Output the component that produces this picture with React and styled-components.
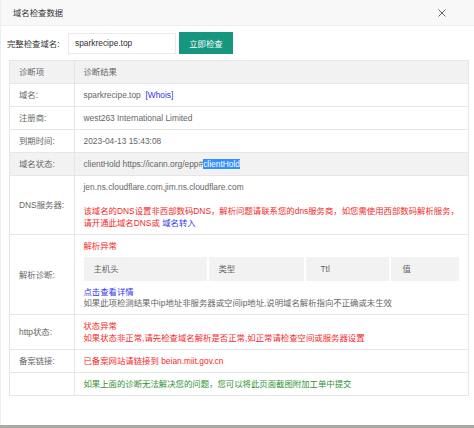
import React from 'react';
import styled, { createGlobalStyle } from 'styled-components';

const GlobalStyle = createGlobalStyle`
    html, body {
        margin: 0;
        padding: 0;
        background: #a9a9a3;
    }
    body {
        font-family: "Liberation Sans", "Noto Sans CJK SC", sans-serif;
        font-size: 8.4px;
        color: #666;
    }
`;

const Dialog = styled.div`
    width: 474px;
    height: 425px;
    background: #fff;
    box-sizing: border-box;
    border-left: 1px solid #eee;
`;

const TitleBar = styled.div`
    height: 25px;
    display: flex;
    align-items: center;
    justify-content: space-between;
    padding: 0 28px 0 12px;
    background: #f8f8f8;
    border-bottom: 1px solid #eee;
    color: #333;
    line-height: 12px;
`;

const Close = styled.span`
    display: flex;
    color: #555;
`;

const SearchRow = styled.div`
    display: flex;
    align-items: center;
    padding: 6px 0 0 6px;
    height: 22px;
`;

const Label = styled.span`
    color: #333;
    width: 61px;
`;

const Input = styled.div`
    width: 108px;
    height: 21px;
    box-sizing: border-box;
    border: 1px solid #eaeaea;
    padding-left: 6px;
    display: flex;
    align-items: center;
    color: #333;
`;

const CheckButton = styled.div`
    margin-left: 3px;
    width: 54px;
    height: 22px;
    background: #16967f;
    color: #fff;
    display: flex;
    align-items: center;
    justify-content: center;
`;

const Table = styled.table`
    margin: 6px 0 0 8px;
    width: 460px;
    border-collapse: collapse;
    border: 1px solid #e6e6e6;
    line-height: 12px;
`;

const Row = styled.tr`
    background: ${ p => p.$shade ? '#f2f2f2' : '#fff' };
    border-bottom: 1px solid #e6e6e6;
`;

const Cell = styled.td`
    padding: 5px 9px 5px 9px;
    vertical-align: middle;
    text-align: left;
    border-right: 1px solid #e6e6e6;
    width: ${ p => p.$w || 'auto' };
    white-space: nowrap;
`;

const Red = styled.span`
    color: #f52828;
`;

const Blue = styled.span`
    color: #3434ee;
`;

const Green = styled.span`
    color: #2f922f;
`;

const Selected = styled.span`
    background: #3390ff;
    color: #fff;
`;

const Block = styled.div`
    line-height: ${ p => p.$lh || '12px' };
`;

const InnerTable = styled.table`
    margin: 5px 0 6px;
    width: 100%;
    border-collapse: collapse;
    background: #f2f2f2;
`;

const InnerHead = styled.td`
    height: 24px;
    padding: 0 0 0 ${ p => p.$pad || '10px' };
    width: ${ p => p.$w };
    border-right: 2px solid #fff;
    &:last-child { border-right: none; }
`;

export default function App() {
    return (
        <>
            <GlobalStyle />
            <Dialog>
                <TitleBar>
                    <span>域名检查数据</span>
                    <Close>
                        <svg width="8" height="8" viewBox="0 0 8 8">
                            <path d="M0.5 0.5L7.5 7.5M7.5 0.5L0.5 7.5" stroke="#555" strokeWidth="0.9" />
                        </svg>
                    </Close>
                </TitleBar>
                <SearchRow>
                    <Label>完整检查域名:</Label>
                    <Input>sparkrecipe.top</Input>
                    <CheckButton>立即检查</CheckButton>
                </SearchRow>
                <Table>
                    <tbody>
                        <Row $shade>
                            <Cell $w="47px">诊断项</Cell>
                            <Cell>诊断结果</Cell>
                        </Row>
                        <Row>
                            <Cell>域名:</Cell>
                            <Cell>sparkrecipe.top&nbsp;&nbsp;<Blue>[Whois]</Blue></Cell>
                        </Row>
                        <Row>
                            <Cell>注册商:</Cell>
                            <Cell>west263 International Limited</Cell>
                        </Row>
                        <Row>
                            <Cell>到期时间:</Cell>
                            <Cell>2023-04-13 15:43:08</Cell>
                        </Row>
                        <Row $shade>
                            <Cell>域名状态:</Cell>
                            <Cell>clientHold https://icann.org/epp#<Selected>clientHold</Selected></Cell>
                        </Row>
                        <Row>
                            <Cell>DNS服务器:</Cell>
                            <Cell>
                                <Block>jen.ns.cloudflare.com,jim.ns.cloudflare.com</Block>
                                <Block>&nbsp;</Block>
                                <Block><Red>该域名的DNS设置非西部数码DNS，解析问题请联系您的dns服务商，如您需使用西部数码解析服务，</Red></Block>
                                <Block><Red>请开通此域名DNS或</Red> <Blue>域名转入</Blue></Block>
                            </Cell>
                        </Row>
                        <Row>
                            <Cell>解析诊断:</Cell>
                            <Cell>
                                <Block><Red>解析异常</Red></Block>
                                <InnerTable>
                                    <tbody>
                                        <tr>
                                            <InnerHead $w="113px">主机头</InnerHead>
                                            <InnerHead $w="85px">类型</InnerHead>
                                            <InnerHead $w="68px" $pad="15px">Ttl</InnerHead>
                                            <InnerHead $pad="12px">值</InnerHead>
                                        </tr>
                                    </tbody>
                                </InnerTable>
                                <Block $lh="11px"><Blue>点击查看详情</Blue></Block>
                                <Block $lh="11px">如果此项检测结果中ip地址非服务器或空间ip地址,说明域名解析指向不正确或未生效</Block>
                            </Cell>
                        </Row>
                        <Row>
                            <Cell>http状态:</Cell>
                            <Cell>
                                <Block><Red>状态异常</Red></Block>
                                <Block><Red>如果状态非正常,请先检查域名解析是否正常,如正常请检查空间或服务器设置</Red></Block>
                            </Cell>
                        </Row>
                        <Row>
                            <Cell>备案链接:</Cell>
                            <Cell><Red>已备案网站请链接到 beian.miit.gov.cn</Red></Cell>
                        </Row>
                        <Row>
                            <Cell></Cell>
                            <Cell><Green>如果上面的诊断无法解决您的问题，您可以将此页面截图附加工单中提交</Green></Cell>
                        </Row>
                    </tbody>
                </Table>
            </Dialog>
        </>
    );
}
